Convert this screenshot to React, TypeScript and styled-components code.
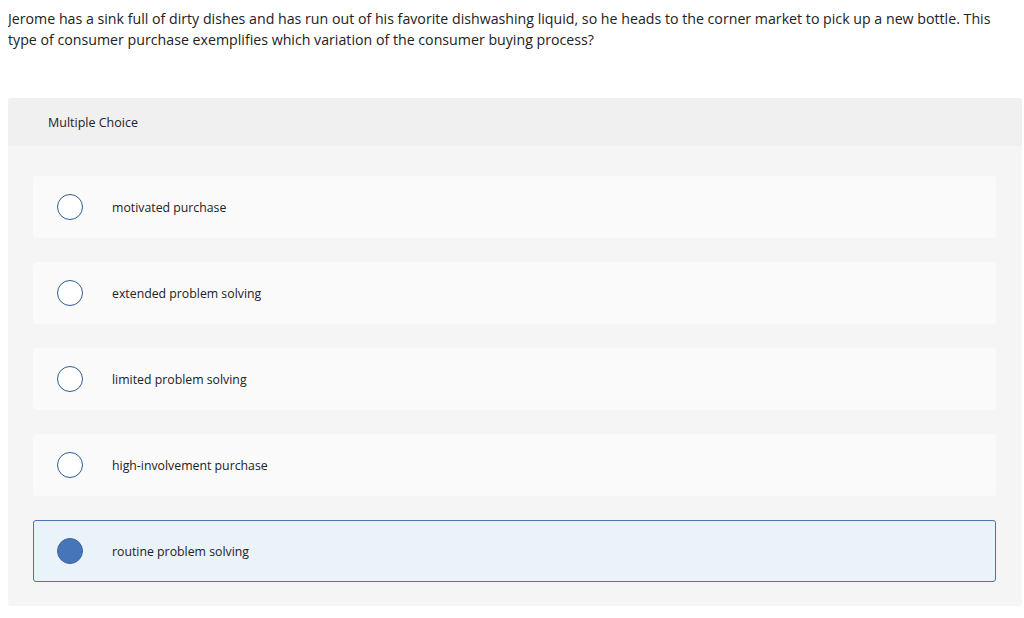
import styled, { createGlobalStyle } from "styled-components";

const GlobalStyle = createGlobalStyle`
  body {
    margin: 8px 2px 8px 8px;
    background: #ffffff;
    font-family: "Open Sans", Lato, sans-serif;
    color: #222222;
  }
`;

const Question = styled.p`
  margin: 0;
  font-size: 14.2px;
  line-height: 21px;
  color: #222222;
  padding-right: 14px;
`;

const Panel = styled.section`
  margin-top: 48px;
  background: #f5f5f5;
  border-radius: 3px;
  overflow: hidden;
`;

const PanelHeader = styled.div`
  height: 48px;
  display: flex;
  align-items: center;
  padding-left: 40px;
  background: #f0f0f0;
  font-size: 12.5px;
  color: #222222;
`;

const Options = styled.div`
  display: flex;
  flex-direction: column;
  gap: 24px;
  padding: 30px 26px 24px 25px;
`;

const Option = styled.label<{ $selected?: boolean }>`
  display: flex;
  align-items: center;
  box-sizing: border-box;
  height: 62px;
  padding-left: 23px;
  border-radius: 3px;
  background: ${({ $selected }) => ($selected ? "#eaf2fa" : "#fafafa")};
  border: 1px solid ${({ $selected }) => ($selected ? "#4a74ae" : "#fafafa")};
  cursor: pointer;
`;

const Radio = styled.span<{ $selected?: boolean }>`
  box-sizing: border-box;
  width: 26px;
  height: 26px;
  border-radius: 50%;
  border: 1px solid ${({ $selected }) => ($selected ? "#3d659c" : "#2f5d92")};
  background: ${({ $selected }) => ($selected ? "#4676b9" : "#ffffff")};
  flex-shrink: 0;
`;

const OptionText = styled.span`
  margin-left: 29px;
  font-size: 12.3px;
  color: #222222;
`;

const choices = [
  "motivated purchase",
  "extended problem solving",
  "limited problem solving",
  "high-involvement purchase",
  "routine problem solving",
];

const App = () => {
  const selected = 4;
  return (
    <>
      <GlobalStyle />
      <Question>
        Jerome has a sink full of dirty dishes and has run out of his favorite dishwashing liquid, so he heads to the
        corner market to pick up a new bottle. This type of consumer purchase exemplifies which variation of the
        consumer buying process?
      </Question>
      <Panel>
        <PanelHeader>Multiple Choice</PanelHeader>
        <Options>
          {choices.map((c, i) => (
            <Option key={c} $selected={i === selected}>
              <Radio $selected={i === selected} />
              <OptionText>{c}</OptionText>
            </Option>
          ))}
        </Options>
      </Panel>
    </>
  );
};

export default App;
